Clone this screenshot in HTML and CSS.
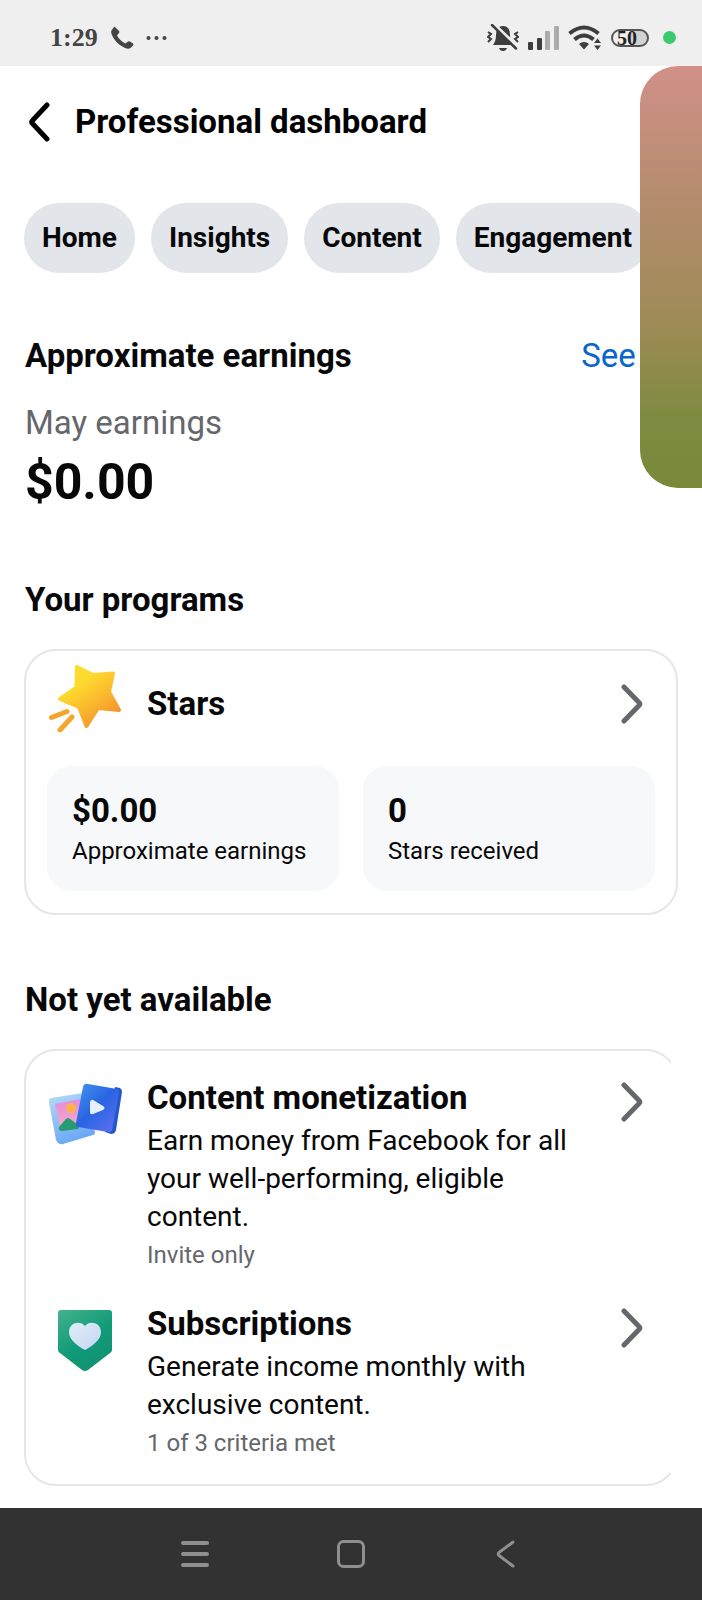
FILE: index.html
```html
<!DOCTYPE html>
<html lang="en">
<head>
    <meta charset="UTF-8">
    <meta name="viewport" content="width=device-width, initial-scale=1.0">
    <title>Professional dashboard</title>
    <link rel="stylesheet" href="styles.css">
</head>
<body>
    <div class="status-bar">
        <div class="status-left">
            <span class="clock">1:29</span>
            <svg width="24" height="24" viewBox="0 0 24 24" fill="#444">
                <path d="M5 1 L9 5 Q10 6 9 7 L7 9.500 Q10 15 15.500 17.500 L18 15.500 Q19 15 20 15.500 L23 17.500 Q24 18.500 23 19.500 L20.500 22 Q18.500 23.500 15 22 Q5 17.500 1.500 8 Q0.500 4.500 2.500 3 L4 1 Q4.500 0.500 5 1 Z"/>
            </svg>
            <svg width="22" height="6" viewBox="0 0 22 6" fill="#444">
                <circle cx="2.500" cy="3" r="2"/>
                <circle cx="10.500" cy="3" r="2"/>
                <circle cx="18.500" cy="3" r="2"/>
            </svg>
        </div>
        <div class="status-right">
            <svg width="32" height="28" viewBox="0 0 32 28">
                <path d="M6 21 Q9 17 9 11 Q9 2 16 2 Q23 2 23 11 Q23 17 26 21 Z" fill="#3d3d3d"/>
                <path d="M12 24 H20 Q19 27 16 27 Q13 27 12 24 Z" fill="#3d3d3d"/>
                <path d="M1 8 L4 10 L1 13 L4 15 L1 18 M31 8 L28 10 L31 13 L28 15 L31 18" fill="none" stroke="#3d3d3d" stroke-width="2"/>
                <path d="M7 0 L31 23" stroke="#efefef" stroke-width="3"/>
                <path d="M5 1 L29 24.500" stroke="#3d3d3d" stroke-width="2.500" stroke-linecap="round"/>
            </svg>
            <svg width="31" height="24" viewBox="0 0 31 24">
                <rect x="0" y="16" width="5" height="8" rx="1" fill="#3d3d3d"/>
                <rect x="9" y="12" width="5" height="12" rx="1" fill="#3d3d3d"/>
                <rect x="17" y="5" width="5" height="19" rx="1" fill="#ababab"/>
                <rect x="26" y="0" width="5" height="24" rx="1" fill="#ababab"/>
            </svg>
            <svg width="34" height="26" viewBox="0 0 34 26">
                <g fill="none" stroke="#3d3d3d" stroke-width="4">
                    <path d="M1.500 8.500 Q16 -3.500 30.500 8.500"/>
                    <path d="M6.500 14.500 Q16 6.500 25.500 14.500"/>
                </g>
                <path d="M11 19 Q16 15 21 19 L16 24.500 Z" fill="#3d3d3d"/>
                <path d="M26 18 L29.500 13.500 L33 18 Z M26 20.500 L29.500 25 L33 20.500 Z" fill="#3d3d3d"/>
            </svg>
            <span class="battery">50</span>
            <span class="status-dot"></span>
        </div>
    </div>

    <main class="page">
        <header class="page-header">
            <button class="icon-btn" type="button" aria-label="Back">
                <svg width="24" height="40" viewBox="0 0 24 40" fill="none" stroke="#000" stroke-width="5" stroke-linecap="round" stroke-linejoin="round">
                    <path d="M20 3 L5.500 18.500 Q4 20 5.500 21.500 L20 37"/>
                </svg>
            </button>
            <h1>Professional dashboard</h1>
        </header>

        <nav class="chips">
            <button type="button">Home</button>
            <button type="button">Insights</button>
            <button type="button">Content</button>
            <button type="button">Engagement</button>
        </nav>

        <section class="earnings">
            <div class="section-head">
                <h2>Approximate earnings</h2>
                <a href="#">See all</a>
            </div>
            <p class="earnings-label">May earnings</p>
            <p class="earnings-value">$0.00</p>
        </section>

        <section class="programs">
            <h2>Your programs</h2>
            <div class="card stars-card">
                <div class="stars-head">
                    <svg class="stars-icon" width="74" height="68" viewBox="0 0 74 68">
                        <defs>
                            <linearGradient id="star" x1="0.200" y1="0.100" x2="0.800" y2="0.950">
                                <stop offset="0.200" stop-color="#fddb2e"/>
                                <stop offset="0.550" stop-color="#fbbd2d"/>
                                <stop offset="1" stop-color="#f5902f"/>
                            </linearGradient>
                        </defs>
                        <path d="M28 3 L44 11 L64 9.500 L60 28 L70 46 L49 44 L37.500 62 L30 43 L11 35 L27.500 23.500 Z" fill="url(#star)" stroke="url(#star)" stroke-width="4" stroke-linejoin="round"/>
                        <path d="M2.500 53.500 L18 47.500" stroke="#f3a42b" stroke-width="5" stroke-linecap="round"/>
                        <path d="M11 66 L23 53" stroke="#f5a62d" stroke-width="5" stroke-linecap="round"/>
                    </svg>
                    <h3>Stars</h3>
                    <button class="icon-btn" type="button" aria-label="Open Stars">
                        <svg width="22" height="40" viewBox="0 0 22 40" fill="none" stroke="#65676b" stroke-width="5" stroke-linecap="round" stroke-linejoin="round">
                            <path d="M3 3 L18 18.500 Q19.500 20 18 21.500 L3 37"/>
                        </svg>
                    </button>
                </div>
                <div class="tiles">
                    <div class="tile">
                        <strong>$0.00</strong>
                        <span>Approximate earnings</span>
                    </div>
                    <div class="tile">
                        <strong>0</strong>
                        <span>Stars received</span>
                    </div>
                </div>
            </div>
        </section>

        <section class="unavailable">
            <h2>Not yet available</h2>
            <div class="card-clip">
                <div class="card list-card">
                    <div class="item">
                        <svg class="item-icon" width="74" height="74" viewBox="0 0 74 74">
                            <defs>
                                <linearGradient id="frame" x1="0" y1="0" x2="0.400" y2="1">
                                    <stop offset="0" stop-color="#b7dcf8"/>
                                    <stop offset="1" stop-color="#6ba9f5"/>
                                </linearGradient>
                                <linearGradient id="sky" x1="0" y1="0" x2="0" y2="1">
                                    <stop offset="0" stop-color="#e58be0"/>
                                    <stop offset="1" stop-color="#f5afc5"/>
                                </linearGradient>
                                <linearGradient id="video" x1="0" y1="0" x2="0.900" y2="1">
                                    <stop offset="0" stop-color="#4595f0"/>
                                    <stop offset="0.500" stop-color="#2964e2"/>
                                    <stop offset="1" stop-color="#5f6ff0"/>
                                </linearGradient>
                            </defs>
                            <path d="M2 20 L34 15 L46 54 Q46 57 44 57 L14 66 Q9 67 7 62 L0 24 Q-1 21 2 20 Z" fill="url(#frame)"/>
                            <path d="M6 26 L32 21 L37 48 L12 53 Z" fill="url(#sky)"/>
                            <circle cx="22" cy="30" r="5" fill="#fdb34a"/>
                            <path d="M10 49 L17 41 Q19 39 21 41 L31 48 L29 51 L13 53 Q9 53 10 49 Z" fill="#279b72"/>
                            <path d="M66 9 L71 10 Q73 11 73 14 L67 52 Q66 56 62 56 L56 54 Z" fill="#2458c8"/>
                            <path d="M39 6 L68 11 Q71 12 70 15 L63 52 Q62 55 59 54 L29 49 Q26 48 27 45 L34 9 Q35 5 39 6 Z" fill="url(#video)"/>
                            <path d="M44 22 L54 28 Q57 30 54 32 L44 36 Q41 37 41 34 L41 24 Q42 21 44 22 Z" fill="#e4efff"/>
                        </svg>
                        <div class="item-text">
                            <h3>Content monetization</h3>
                            <p>Earn money from Facebook for all your well-performing, eligible content.</p>
                            <small>Invite only</small>
                        </div>
                        <button class="icon-btn" type="button" aria-label="Open Content monetization">
                            <svg width="22" height="40" viewBox="0 0 22 40" fill="none" stroke="#65676b" stroke-width="5" stroke-linecap="round" stroke-linejoin="round">
                                <path d="M3 3 L18 18.500 Q19.500 20 18 21.500 L3 37"/>
                            </svg>
                        </button>
                    </div>
                    <div class="item">
                        <svg class="item-icon" width="74" height="74" viewBox="0 0 74 74">
                            <defs>
                                <linearGradient id="badge" x1="0" y1="0" x2="0.600" y2="1">
                                    <stop offset="0" stop-color="#45b28c"/>
                                    <stop offset="0.600" stop-color="#109b78"/>
                                    <stop offset="1" stop-color="#129274"/>
                                </linearGradient>
                                <linearGradient id="heart" x1="0" y1="0" x2="1" y2="1">
                                    <stop offset="0" stop-color="#ddf0f6"/>
                                    <stop offset="1" stop-color="#c8d3f5"/>
                                </linearGradient>
                            </defs>
                            <path d="M12 6 H60 Q63 6 63 9 V46 Q63 48 61 49 L39 66 Q36 68 33 66 L11 49 Q9 48 9 46 V9 Q9 6 12 6 Z" fill="url(#badge)"/>
                            <path d="M36 46 C29 42 20 36 20 28 C20 18 32 16 36 22 C40 16 52 18 52 28 C52 36 43 42 36 46 Z" fill="url(#heart)"/>
                        </svg>
                        <div class="item-text">
                            <h3>Subscriptions</h3>
                            <p>Generate income monthly with exclusive content.</p>
                            <small>1 of 3 criteria met</small>
                        </div>
                        <button class="icon-btn" type="button" aria-label="Open Subscriptions">
                            <svg width="22" height="40" viewBox="0 0 22 40" fill="none" stroke="#65676b" stroke-width="5" stroke-linecap="round" stroke-linejoin="round">
                                <path d="M3 3 L18 18.500 Q19.500 20 18 21.500 L3 37"/>
                            </svg>
                        </button>
                    </div>
                </div>
            </div>
        </section>
    </main>

    <!-- floating call window, docked past the right edge -->
    <div class="floating-window"></div>

    <nav class="system-nav">
        <button class="icon-btn" type="button" aria-label="Recent apps">
            <svg width="28" height="28" viewBox="0 0 28 28" stroke="#8f8f8f" stroke-width="4" stroke-linecap="round">
                <path d="M2 3 H26 M2 14 H26 M2 25 H26"/>
            </svg>
        </button>
        <button class="icon-btn" type="button" aria-label="Home screen">
            <svg width="28" height="28" viewBox="0 0 28 28" fill="none" stroke="#8f8f8f" stroke-width="3">
                <rect x="1.500" y="1.500" width="25" height="25" rx="5"/>
            </svg>
        </button>
        <button class="icon-btn" type="button" aria-label="Back">
            <svg width="28" height="28" viewBox="0 0 28 28" fill="none" stroke="#8f8f8f" stroke-width="3" stroke-linecap="round" stroke-linejoin="round">
                <path d="M20 2 L6 12.500 Q4.500 14 6 15.500 L20 26"/>
            </svg>
        </button>
    </nav>
</body>
</html>
```
FILE: styles.css
```css
* {
    box-sizing: border-box;
}
body {
    font-family: Roboto, "Liberation Sans", sans-serif;
    margin: 0;
    min-height: 100vh;
    display: flex;
    flex-direction: column;
    position: relative;
    overflow-x: hidden;
    background: #fff;
    color: #080809;
}
h1, h2, h3, p {
    margin: 0;
}
h1, h2, h3 {
    font-size: 33px;
    line-height: 40px;
    font-weight: 700;
}
h1 {
    color: #000;
}
svg {
    display: block;
    flex: none;
}
button {
    font-family: inherit;
    color: inherit;
    border: 0;
    cursor: pointer;
}
.icon-btn {
    padding: 0;
    background: none;
    flex: none;
}

/* status bar */
.status-bar {
    height: 66px;
    padding: 9px 26px 0 50px;
    display: flex;
    align-items: center;
    justify-content: space-between;
    background: #efefef;
}
.status-left {
    display: flex;
    align-items: center;
    gap: 12px;
}
.status-right {
    display: flex;
    align-items: center;
    gap: 9px;
}
.clock {
    font: bold 26px/30px "Liberation Serif", serif;
    color: #444;
}
.battery {
    width: 38px;
    height: 18px;
    padding-left: 4px;
    border: 2px solid #555;
    border-radius: 9px;
    background: linear-gradient(90deg, #efefef 50%, #d2d2d2 50%);
    font: bold 20px/15px "Liberation Serif", serif;
    color: #222;
}
.status-dot {
    width: 13px;
    height: 13px;
    margin-left: 5px;
    border-radius: 50%;
    background: #3ccb6c;
}

/* page */
.page {
    flex: 1;
    padding: 0 24px 21px;
}
.page-header {
    height: 112px;
    display: flex;
    align-items: center;
    gap: 24px;
    padding-left: 3px;
}
.chips {
    display: flex;
    gap: 16px;
    margin: 25px -24px 0 0;
    overflow: hidden;
}
.chips button {
    flex: none;
    height: 70px;
    padding: 0 18px 2px;
    border-radius: 35px;
    background: #e2e5ea;
    font-size: 28px;
    font-weight: 700;
}
.earnings {
    margin-top: 63px;
}
.section-head {
    display: flex;
    justify-content: space-between;
    font-size: 33px;
    line-height: 40px;
}
.section-head a {
    color: #0866cc;
    text-decoration: none;
}
.earnings h2,
.programs > h2,
.unavailable > h2 {
    padding-left: 1px;
}
.earnings-label {
    margin-top: 27px;
    padding-left: 1px;
    font-size: 33px;
    line-height: 40px;
    color: #65676b;
}
.earnings-value {
    margin-top: 9px;
    padding-left: 1px;
    font-size: 50px;
    line-height: 60px;
    font-weight: 700;
}
.programs {
    margin-top: 68px;
}
.unavailable {
    margin-top: 65px;
}

/* cards */
.card {
    margin-top: 29px;
    border: 2px solid #e4e6ea;
    border-radius: 32px;
}
.stars-card {
    padding: 0 21px 22px;
}
.stars-head {
    height: 106px;
    margin-bottom: 9px;
    padding: 0 12px 0 2px;
    display: flex;
    align-items: center;
    gap: 24px;
}
.stars-head h3 {
    flex: 1;
}
.stars-icon {
    margin-bottom: 12px;
}
.tiles {
    display: grid;
    grid-template-columns: 1fr 1fr;
    gap: 24px;
}
.tile {
    display: flex;
    flex-direction: column;
    gap: 4px;
    padding: 25px 25px 24px;
    border-radius: 24px;
    background: #f7f8fa;
}
.tile strong {
    font-size: 33px;
    line-height: 40px;
    font-weight: 700;
}
.tile span {
    font-size: 24px;
    line-height: 32px;
}

.card-clip {
    margin-right: 7px;
    overflow: hidden;
}
.list-card {
    margin-right: -7px;
    padding: 27px 33px 24px 23px;
    display: flex;
    flex-direction: column;
    gap: 32px;
}
.item {
    display: flex;
    align-items: flex-start;
    gap: 24px;
}
.item-text {
    flex: 1;
}
.item-text p {
    margin-top: 4px;
    font-size: 28px;
    line-height: 38px;
}
.item-text small {
    display: block;
    margin-top: 2px;
    font-size: 24px;
    line-height: 34px;
    color: #65676b;
}
.item .icon-btn {
    margin-top: 4px;
}

.floating-window {
    position: absolute;
    top: 66px;
    right: 0;
    width: 62px;
    height: 422px;
    border-radius: 38px 0 0 38px;
    background: linear-gradient(#d19088, #b38c6c 33%, #9d8b55 62%, #7c8b3f 85%, #79893a);
}

.system-nav {
    height: 92px;
    display: flex;
    align-items: center;
    justify-content: center;
    gap: 128px;
    background: #323232;
}
```
